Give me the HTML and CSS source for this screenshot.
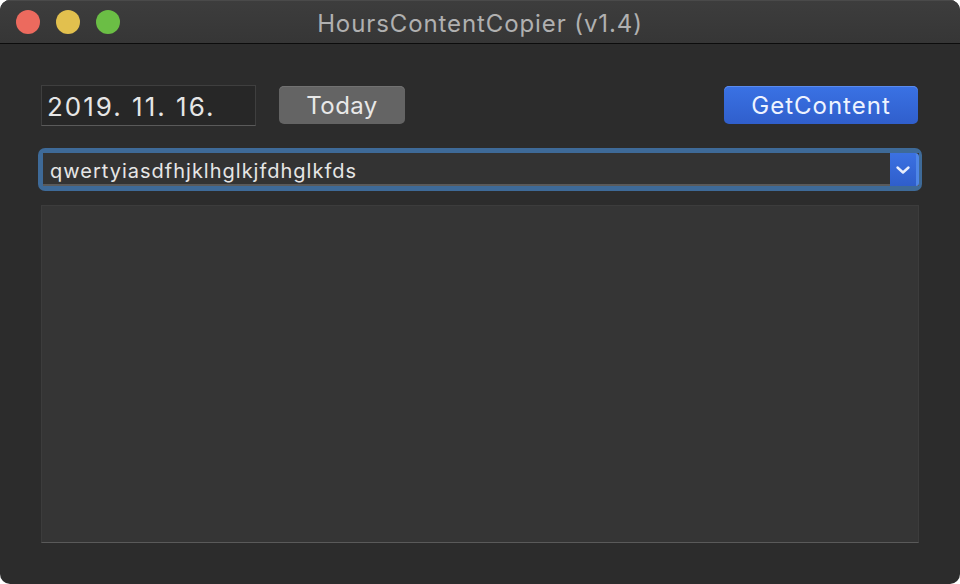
FILE: index.html
```html
<!DOCTYPE html>
<html>
<head>
<meta charset="utf-8">
<link rel="stylesheet" href="styles.css">
</head>
<body>
<div class="window">
  <div class="titlebar">
    <div class="lights">
      <span class="light red"></span>
      <span class="light yellow"></span>
      <span class="light green"></span>
    </div>
    <div class="title">HoursContentCopier (v1.4)</div>
  </div>
  <div class="content">
    <div class="toprow">
      <div class="datefield">2019. 11. 16.</div>
      <div class="btn today">Today</div>
      <div class="spacer"></div>
      <div class="btn primary">GetContent</div>
    </div>
    <div class="combo-ring">
      <div class="combo">
        <div class="combo-text">qwertyiasdfhjklhglkjfdhglkfds</div>
        <div class="combo-btn">
          <svg width="16" height="10" viewBox="0 0 16 10"><path d="M2.5 2.5 L8 7.5 L13.5 2.5" fill="none" stroke="#e8eefc" stroke-width="2.4" stroke-linecap="round" stroke-linejoin="round"/></svg>
        </div>
      </div>
    </div>
    <div class="textarea"></div>
  </div>
</div>
</body>
</html>
```
FILE: styles.css
```css
html, body {
  margin: 0;
  padding: 0;
  background: #ffffff;
}
.window {
  width: 960px;
  height: 584px;
  background: #2c2c2c;
  border-radius: 10px;
  overflow: hidden;
  display: flex;
  flex-direction: column;
  font-family: "Inter", "Liberation Sans", sans-serif;
}
.titlebar {
  height: 43px;
  flex: none;
  background: linear-gradient(#3d3d3d, #363636);
  border-bottom: 1px solid #0c0c0c;
  box-shadow: inset 0 1px 0 #4a4a4a;
  display: flex;
  align-items: center;
  position: relative;
}
.lights {
  display: flex;
  gap: 16px;
  padding-left: 16px;
}
.light {
  width: 24px;
  height: 24px;
  border-radius: 50%;
  display: block;
}
.red { background: #ec6a5e; }
.yellow { background: #e2c04e; }
.green { background: #6bbe45; }
.title {
  position: absolute;
  left: 0;
  right: 0;
  top: 2px;
  line-height: 43px;
  text-align: center;
  color: #b0b0b0;
  font-size: 24px;
  letter-spacing: 0.9px;
}
.content {
  flex: 1;
  padding: 40px 38px 0 38px;
  display: flex;
  flex-direction: column;
}
.toprow {
  display: flex;
  align-items: center;
  padding: 0 4px 0 3px;
  height: 42px;
}
.datefield {
  width: 208px;
  height: 39px;
  background: #272727;
  border: 1px solid #3f3f3f;
  border-bottom-color: #5a5a5a;
  color: #e6e6e6;
  font-size: 26px;
  letter-spacing: 2px;
  line-height: 41px;
  padding-left: 5px;
  box-sizing: content-box;
  white-space: nowrap;
  overflow: hidden;
}
.btn {
  height: 38px;
  line-height: 40px;
  border-radius: 5px;
  text-align: center;
  font-size: 24px;
  color: #e8e8e8;
  box-sizing: border-box;
}
.today {
  margin-left: 23px;
  width: 126px;
  background: #646464;
  box-shadow: inset 0 1px 0 #727272;
  letter-spacing: 0.4px;
}
.spacer { flex: 1; }
.primary {
  width: 194px;
  background: linear-gradient(#3a72e4, #305fcc);
  box-shadow: inset 0 1px 0 #5a8bef;
  color: #eef3ff;
  letter-spacing: 1px;
}
.combo-ring {
  margin-top: 22px;
  height: 43px;
  box-sizing: border-box;
  border-radius: 7px;
  background: #3e6a98;
  padding: 5px 3px 5px 5px;
}
.combo {
  height: 33px;
  display: flex;
  background: #333333;
  border-bottom: 2px solid #5a5a5a;
  box-sizing: border-box;
}
.combo-text {
  flex: 1;
  color: #e6e6e6;
  font-size: 20px;
  letter-spacing: 1px;
  line-height: 37px;
  padding-left: 7px;
}
.combo-btn {
  width: 26px;
  margin-bottom: -2px;
  background: linear-gradient(#3b71e2, #2f5ecb);
  border-right: 3px solid #4e86e6;
  border-radius: 0 4px 3px 0;
  display: flex;
  align-items: center;
  justify-content: center;
}
.textarea {
  margin: 14px 3px 0 3px;
  height: 336px;
  background: #353535;
  border: 1px solid #3c3c3c;
  border-bottom: 1px solid #5a5a5a;
}
```
